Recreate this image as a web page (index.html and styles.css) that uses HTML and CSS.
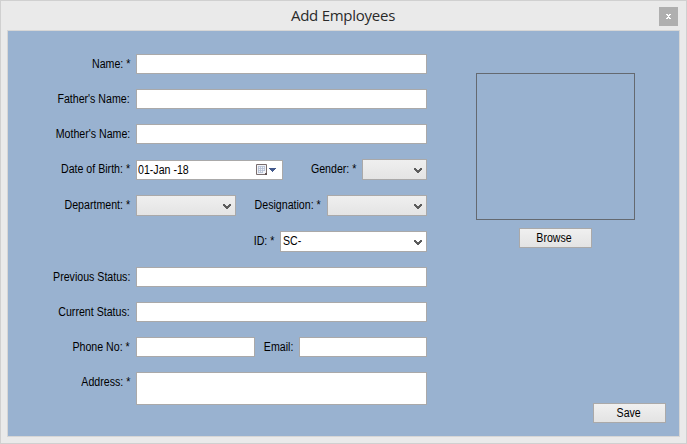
FILE: index.html
```
<!DOCTYPE html>
<html lang="en">
<head>
<meta charset="utf-8">
<title>Add Employees</title>
<link rel="stylesheet" href="styles.css">
</head>
<body>
<svg class="defs" width="0" height="0"><defs><g id="chev"><path d="M0 0h2v1h1v1h2v-1h1v-1h2v2h-1v1h-1v1h-1v1h-2v-1h-1v-1h-1v-1h-1z" fill="#5c5c5c" shape-rendering="crispEdges"/></g></defs></svg>
<div class="window">
  <header class="titlebar"><h1 class="title">Add Employees</h1><button class="close" aria-label="Close"><svg width="5" height="5" viewBox="0 0 5 5" shape-rendering="crispEdges"><path d="M0 0h2v1h1v-1h2v1h-1v1h-1v1h1v1h1v1h-2v-1h-1v1h-2v-1h1v-1h1v-1h-1v-1h-1z" fill="#fff"/></svg></button></header>
  <main class="panel">
    <form class="form">
      <div class="row"><label class="label"><span class="t">Name: *</span></label><div class="field grow"></div></div>
      <div class="row"><label class="label"><span class="t">Father's Name:</span></label><div class="field grow"></div></div>
      <div class="row"><label class="label"><span class="t">Mother's Name:</span></label><div class="field grow"></div></div>
      <div class="row dob"><label class="label"><span class="t">Date of Birth: *</span></label><div class="field date"><span class="t">01-Jan -18</span>
        <svg class="cal" width="22" height="14" viewBox="0 0 22 14"><path d="M1.5 1.5h10v8l-2 2h-8z" fill="#f2f3f7" stroke="#796d6d"/><path d="M12 9v3H9z" fill="#5d4f50"/><path d="M3.5 3v7M5.5 3v7M7.5 3v7M9.5 3v5M3 3.5h7M3 5.5h7M3 7.5h7M3 9.5h5" stroke="#b4bfd3" stroke-width=".8"/><path d="M14 5h7v1h-1v1h-1v1h-1v1h-1v-1h-1v-1h-1v-1h-1z" fill="#43598c" shape-rendering="crispEdges"/></svg></div>
        <label class="label flex"><span class="t">Gender: *</span></label><div class="field select gender"><svg class="chev" width="8" height="5"><use href="#chev"/></svg></div></div>
      <div class="row tall"><label class="label"><span class="t">Department: *</span></label><div class="field select"><svg class="chev" width="8" height="5"><use href="#chev"/></svg></div><label class="label flex"><span class="t">Designation: *</span></label><div class="field select"><svg class="chev" width="8" height="5"><use href="#chev"/></svg></div></div>
      <div class="row tall"><label class="label flex"><span class="t">ID: *</span></label><div class="field select combo"><span class="t">SC-</span><svg class="chev" width="8" height="5"><use href="#chev"/></svg></div></div>
      <div class="row"><label class="label"><span class="t">Previous Status:</span></label><div class="field grow"></div></div>
      <div class="row"><label class="label"><span class="t">Current Status:</span></label><div class="field grow"></div></div>
      <div class="row"><label class="label"><span class="t">Phone No: *</span></label><div class="field phone"></div><label class="label flex"><span class="t">Email:</span></label><div class="field email"></div></div>
      <div class="row"><label class="label"><span class="t">Address: *</span></label><div class="field grow area"></div></div>
    </form>
    <aside class="side">
      <div class="photo"></div>
      <button class="btn browse"><span class="t">Browse</span></button>
      <button class="btn save"><span class="t">Save</span></button>
    </aside>
  </main>
</div>
</body>
</html>
```
FILE: styles.css
```
* { box-sizing: border-box; }
body { margin: 0; font-family: "Liberation Sans", Arial, sans-serif; font-size: 12px; color: #000; }
.defs { display: block; }
.window { width: 687px; height: 444px; background: #eaeaea; border: 1px solid #d0d0d0; padding: 0 6px; }
.titlebar { height: 29px; display: flex; justify-content: flex-end; align-items: center; padding-right: 2px; }
.title { flex: 1; margin: 0 0 2px 20px; text-align: center; font: 400 15px/28px "Open Sans", "Noto Sans", sans-serif; letter-spacing: -.25px; color: #2a2a2a; }
.close { width: 19px; height: 19px; margin-top: 1px; padding: 0; border: 0; background: #afafaf; display: flex; align-items: center; justify-content: center; }
.panel { width: 673px; height: 407px; border: 1px solid #d6d6d6; background: #99b2d0; display: flex; }
.form { width: 419px; padding-top: 23px; display: flex; flex-direction: column; gap: 15px; }
.row { display: flex; min-height: 20px; }
.dob { height: 21px; align-items: flex-end; }
.tall { height: 21px; }
.label { width: 128px; height: 20px; line-height: 20px; padding-right: 6px; text-align: right; white-space: nowrap; }
.dob .label { height: 21px; }
.label.flex { flex: 1; width: auto; }
.t { display: inline-block; transform: scaleX(.885); transform-origin: right center; }
.field { height: 20px; background: #fff; border: 1px solid #aaa9a9; line-height: 18px; }
.field .t { transform-origin: left center; }
.grow { flex: 1; }
.date { width: 147px; padding-left: 1px; display: flex; justify-content: space-between; white-space: nowrap; }
.cal { margin: 2px 5px 0 0; }
.select { width: 100px; height: 21px; background: linear-gradient(#efefef, #e4e4e4); display: flex; align-items: center; justify-content: flex-end; padding-right: 4px; }
.gender { width: 65px; }
.combo { width: 147px; justify-content: space-between; background: #fff; padding-left: 2px; }
.combo .t { margin-top: -1px; }
.chev { display: block; margin-top: 2px; }
.phone { width: 119px; }
.email { width: 128px; }
.area { height: 33px; }
.side { flex: 1; display: flex; flex-direction: column; padding: 42px 13px 0 49px; }
.photo { width: 159px; height: 147px; border: 1px solid #646970; }
.btn { width: 73px; height: 20px; padding: 0; border: 1px solid #aaa9a9; background: linear-gradient(#f0f0f0, #e3e3e3); font: 12px/18px "Liberation Sans", Arial, sans-serif; color: #000; }
.btn .t { transform-origin: center; margin-left: -2px; }
.browse { margin: 8px 0 0 43px; }
.save { margin: 155px 0 0; align-self: flex-end; }
```
